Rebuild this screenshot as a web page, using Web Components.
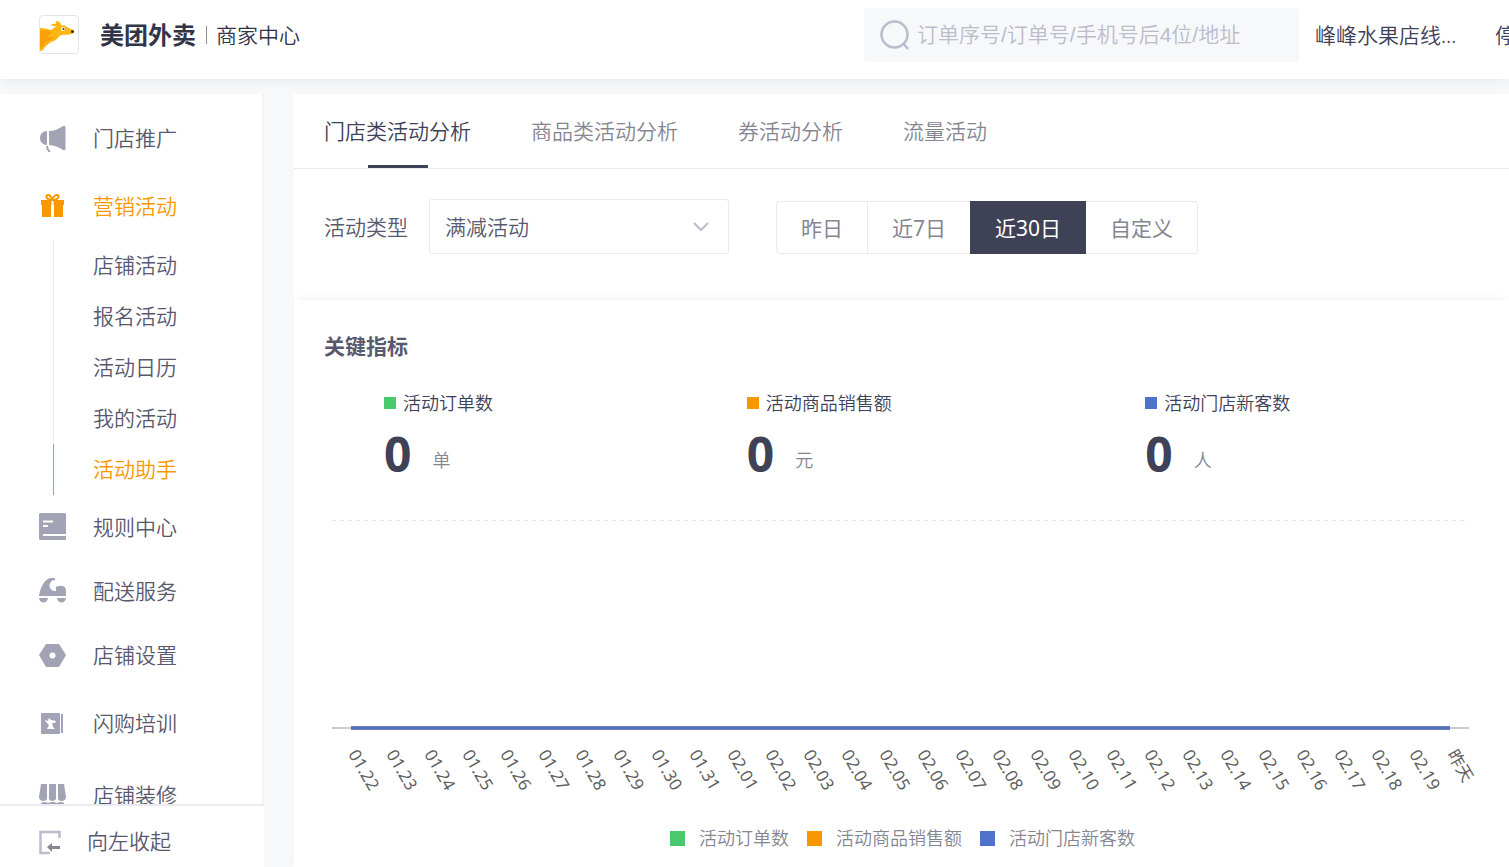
<!DOCTYPE html>
<html lang="zh-CN">
<head>
<meta charset="utf-8">
<title>美团外卖商家中心</title>
<style>
  body {
    --ink: #3f4156;
    --text: #58596e;
    --muted: #858692;
    --line: #e9eaf2;
    --icon: #a2a3b4;
    --accent: #f89800;
    --page: #f7f8fa;
    margin: 0;
    height: 100vh;
    display: flex;
    flex-direction: column;
    overflow: hidden;
    background: var(--page);
    color: var(--text);
    font: 350 21px/30px "Noto Sans", "Noto Sans CJK SC", sans-serif;
  }
  .layout {
    flex: 1;
    min-height: 0;
    display: flex;
    gap: 30px;
    padding-top: 15px;
  }
  main {
    flex: 1;
    min-width: 0;
    display: flex;
    flex-direction: column;
  }
</style>
</head>
<body>
  <app-header shop="峰峰水果店线..."></app-header>

  <div class="layout">
    <side-nav>
      <nav-item label="门店推广" size="medium">
        <svg width="28" height="28" viewBox="0 0 28 28" fill="currentColor">
          <path d="M8 7v14C4 21 1 18 1 14s3-7 7-7zM10 7c5 0 10-2 14-5h2.500v24H24c-4-3-9-4.500-14-5z"/>
          <path d="M8 22q0 4 3 6" fill="none" stroke="currentColor" stroke-width="2"/>
        </svg>
      </nav-item>
      <nav-item label="营销活动" size="medium" active>
        <svg width="28" height="28" viewBox="0 0 28 28" fill="currentColor">
          <path d="M2 8h23v5h-1v12h-9V13h-3v12H3V13H2z"/>
          <path d="M13 8C7 8 6 3 9 3q3 0 4 5 2-5 5-5c3 0 2 5-5 5z" fill="none" stroke="currentColor" stroke-width="2"/>
          <path d="M13.500 9v16" stroke="#fff" stroke-width="2"/>
        </svg>
      </nav-item>
      <nav-sub-item>店铺活动</nav-sub-item>
      <nav-sub-item>报名活动</nav-sub-item>
      <nav-sub-item>活动日历</nav-sub-item>
      <nav-sub-item>我的活动</nav-sub-item>
      <nav-sub-item active>活动助手</nav-sub-item>
      <nav-item label="规则中心">
        <svg width="28" height="28" viewBox="0 0 28 28">
          <path d="M1 0h25l1 1v26H1l-1-1V1z" fill="currentColor"/>
          <path d="M4 8.500h10M4 13h5M4 22h23" stroke="#fff" stroke-width="2"/>
        </svg>
      </nav-item>
      <nav-item label="配送服务">
        <svg width="28" height="28" viewBox="0 0 28 28" fill="currentColor">
          <path d="M0 19C1 11 6 1 12 1h4v2c-6 0-8 9-1 11h2v-4l2-1h5q3 1 3 5v5z"/>
          <path d="M0 21h9c-1 6-8 6-9 0zM18 21h9c-1 6-8 6-9 0z"/>
        </svg>
      </nav-item>
      <nav-item label="店铺设置">
        <svg width="28" height="28" viewBox="0 0 28 28">
          <path d="M7 3h13l7 11-7 12H7L0 14z" fill="currentColor" stroke-linejoin="round"/>
          <circle cx="13.500" cy="14.500" r="3" fill="#fff"/>
        </svg>
      </nav-item>
      <nav-item label="闪购培训" size="tall">
        <svg width="28" height="28" viewBox="0 0 28 28" fill="currentColor">
          <rect x="2" y="4" width="19" height="21" rx="1"/>
          <path d="M22 5h2v19h-2z"/>
          <path d="M6 11l3 1 1-3 2 2 5 1-1 2h-3l1 4 2 2H8l2-4-3-3z" fill="#fff"/>
        </svg>
      </nav-item>
      <nav-item label="店铺装修" size="tall">
        <svg width="28" height="28" viewBox="0 0 28 28" fill="currentColor">
          <path d="M2 3h6v15q-1 2-3 2-5 0-5-4zM10 3h7v15q-1 2-3.500 2T10 18zM19 3h6l2 13q0 4-5 4-2 0-3-2z"/>
          <path d="M2 22q4-2 7 0 5-2 9 0 4-2 7 0v4H2z"/>
        </svg>
      </nav-item>
    </side-nav>

    <main>
      <tab-bar tabs="门店类活动分析,商品类活动分析,券活动分析,流量活动" current="0"></tab-bar>
      <filter-bar></filter-bar>
      <metric-panel heading="关键指标">
        <metric-item color="#49c96d" value="0" unit="单">活动订单数</metric-item>
        <metric-item color="#f89800" value="0" unit="元">活动商品销售额</metric-item>
        <metric-item color="#4f73cc" value="0" unit="人">活动门店新客数</metric-item>
        <trend-chart slot="chart" from="2020-01-22" days="30"></trend-chart>
      </metric-panel>
    </main>
  </div>

<script>
class AppHeader extends HTMLElement {
  constructor() {
    super();
    this.attachShadow({ mode: 'open' }).innerHTML = `
      <style>
        :host {
          display: flex;
          align-items: center;
          height: 79px;
          box-sizing: border-box;
          padding: 0 0 10px 39px;
          background: #fff;
          box-shadow: 0 2px 10px rgba(0, 0, 0, 0.06);
          color: #323447;
        }
        .logo {
          width: 38px;
          height: 37px;
          border: 1px solid #e4e4ee;
          border-radius: 4px;
        }
        .brand { display: flex; align-items: center; gap: 10px; margin-left: 21px; }
        .brand strong { font-size: 24px; font-weight: 700; }
        .brand span { border-left: 1px solid #8a8b98; padding-left: 9px; line-height: 18px; }
        .search {
          display: flex;
          align-items: center;
          gap: 6px;
          flex: 0 1 435px;
          box-sizing: border-box;
          height: 54px;
          margin-left: auto;
          padding: 0 15px;
          border-radius: 3px;
          background: #f7f8fa;
        }
        .search input {
          flex: 1;
          min-width: 0;
          padding: 0;
          border: 0;
          outline: 0;
          background: none;
          color: inherit;
          font: 350 21px/30px "Liberation Sans", "Noto Sans CJK SC", sans-serif;
        }
        .search input::placeholder { color: #bbbccc; }
        a { color: var(--ink); text-decoration: none; white-space: nowrap; }
        .shop { margin-left: 16px; width: 180px; }
        .status { width: 14px; overflow: hidden; }
      </style>
      <svg class="logo" viewBox="0 0 38 37">
        <path d="M0 12q6 0 11 2 3-2 6-4-4 1-6-1 1-2 5-1-1-3 1-3 4 1 4 4 4 0 6 2l6 3q2 2-1 4-6 1-11 1-2 1-4 4-2 2-6 3-5 3-8 8-1 1-3 1z" fill="#fdb713"/>
        <path d="M0 15q7-2 12 1-2 4-6 4 3 2 8 1-3 4-8 5-2 4-6 7z" fill="#fa9f0a"/>
        <circle cx="23" cy="13" r="2" fill="#fff"/>
        <circle cx="23.500" cy="13" r="1" fill="#333"/>
        <circle cx="32.500" cy="15.500" r="1.500" fill="#4a2b12"/>
      </svg>
      <div class="brand"><strong>美团外卖</strong><span>商家中心</span></div>
      <label class="search">
        <svg width="32" height="32" viewBox="0 0 32 32" fill="none" stroke="#bbbccc" stroke-width="2.500">
          <circle cx="15.500" cy="15.500" r="13"/>
          <path d="M24 24l5 6"/>
        </svg>
        <input type="search" aria-label="搜索" placeholder="订单序号/订单号/手机号后4位/地址">
      </label>
      <a class="shop" href="#">${this.getAttribute('shop')}</a>
      <a class="status" href="#">停</a>
    `;
  }
}

class SideNav extends HTMLElement {
  constructor() {
    super();
    this.attachShadow({ mode: 'open' }).innerHTML = `
      <style>
        :host {
          display: flex;
          flex-direction: column;
          flex: 0 0 264px;
          min-height: 0;
        }
        nav {
          flex: 1;
          min-height: 0;
          overflow: hidden;
          padding-top: 10px;
          background: #fff;
          border-right: 2px solid #f2f2f4;
        }
        button {
          display: flex;
          align-items: center;
          gap: 20px;
          height: 63px;
          padding: 20px 39px 12px;
          border: 0;
          border-top: 2px solid var(--line);
          background: #fff;
          color: inherit;
          font: inherit;
        }
      </style>
      <nav><slot></slot></nav>
      <button type="button">
        <svg width="28" height="28" viewBox="0 0 28 28" fill="none">
          <path d="M20.500 11V5h-19v21H11" stroke="#bbbccc" stroke-width="2.500"/>
          <path d="M8 20l5-4v3h8v3h-8v3z" fill="#858692"/>
        </svg>
        向左收起
      </button>
    `;
  }
}

class NavItem extends HTMLElement {
  constructor() {
    super();
    this.attachShadow({ mode: 'open' }).innerHTML = `
      <style>
        :host { display: block; height: 64px; }
        :host([size="medium"]) { height: 68px; }
        :host([size="tall"]) { height: 72px; }
        a {
          display: flex;
          align-items: center;
          gap: 26px;
          height: 100%;
          padding-left: 39px;
          color: inherit;
          text-decoration: none;
        }
        .icon { display: flex; color: var(--icon); }
        :host([active]) a, :host([active]) .icon { color: var(--accent); }
      </style>
      <a href="#"><span class="icon"><slot></slot></span>${this.getAttribute('label')}</a>
    `;
  }
}

class NavSubItem extends HTMLElement {
  constructor() {
    super();
    this.attachShadow({ mode: 'open' }).innerHTML = `
      <style>
        :host {
          display: block;
          margin-left: 53px;
          border-left: 1px solid var(--line);
        }
        :host([active]) { border-color: var(--accent); color: var(--accent); }
        a {
          display: block;
          padding-left: 39px;
          line-height: 51px;
          color: inherit;
          text-decoration: none;
        }
      </style>
      <a href="#"><slot></slot></a>
    `;
  }
}

class TabBar extends HTMLElement {
  constructor() {
    super();
    const tabs = this.getAttribute('tabs').split(',');
    const current = Number(this.getAttribute('current'));

    this.attachShadow({ mode: 'open' }).innerHTML = `
      <style>
        :host {
          display: flex;
          gap: 60px;
          padding-left: 30px;
          background: #fff;
          border-bottom: 1px solid var(--line);
        }
        button {
          height: 74px;
          padding: 0;
          border: 0;
          background: none;
          color: var(--muted);
          font: inherit;
          white-space: nowrap;
        }
        button[aria-selected="true"] {
          color: var(--ink);
          background: linear-gradient(var(--ink), var(--ink)) center bottom / 60px 3px no-repeat;
        }
      </style>
      ${tabs.map((tab, i) => `
        <button type="button" role="tab" aria-selected="${i === current}">${tab}</button>
      `).join('')}
    `;
    this.setAttribute('role', 'tablist');
  }
}

class FilterBar extends HTMLElement {
  constructor() {
    super();
    this.attachShadow({ mode: 'open' }).innerHTML = `
      <style>
        :host {
          display: flex;
          align-items: center;
          padding: 30px 30px 46px;
          background: #fff;
        }
        .select {
          display: grid;
          align-items: center;
          width: 300px;
          margin: 0 47px 0 21px;
        }
        .select > * { grid-area: 1 / 1; }
        .select svg { justify-self: end; margin-right: 20px; pointer-events: none; }
        select {
          appearance: none;
          height: 55px;
          padding: 0 15px;
          border: 1px solid var(--line);
          border-radius: 3px;
          background: #fff;
          color: inherit;
          font: inherit;
        }
        .range { display: flex; padding-top: 2px; font-weight: 400; }
        .range button {
          height: 53px;
          padding: 0 24px;
          margin-left: -1px;
          border: 1px solid var(--line);
          background: #fff;
          color: var(--muted);
          font: inherit;
          white-space: nowrap;
        }
        .range button:first-child { margin-left: 0; border-radius: 3px 0 0 3px; }
        .range button:last-child { border-radius: 0 3px 3px 0; }
        .range button[aria-pressed="true"] {
          border-color: var(--ink);
          background: var(--ink);
          color: #fff;
          z-index: 1;
        }
      </style>
      <label for="type">活动类型</label>
      <div class="select">
        <select id="type"><option>满减活动</option></select>
        <svg width="16" height="10" viewBox="0 0 16 10" fill="none" stroke="#bbbccc" stroke-width="2">
          <path d="M1 1l7 7 7-7"/>
        </svg>
      </div>
      <div class="range">
        <button type="button" aria-pressed="false">昨日</button>
        <button type="button" aria-pressed="false">近7日</button>
        <button type="button" aria-pressed="true">近30日</button>
        <button type="button" aria-pressed="false">自定义</button>
      </div>
    `;
  }
}

class MetricPanel extends HTMLElement {
  constructor() {
    super();
    this.attachShadow({ mode: 'open' }).innerHTML = `
      <style>
        :host {
          display: block;
          flex: 1;
          background: #fff;
          box-shadow: 0 -4px 8px -4px rgba(0, 0, 0, 0.08);
        }
        h2 { margin: 0; padding: 31px 30px 0; font-size: 21px; font-weight: 700; line-height: 30px; }
        .items {
          display: flex;
          justify-content: space-between;
          padding: 28px 18% 0 90px;
        }
      </style>
      <h2>${this.getAttribute('heading')}</h2>
      <div class="items"><slot></slot></div>
      <slot name="chart"></slot>
    `;
  }
}

class MetricItem extends HTMLElement {
  constructor() {
    super();
    this.attachShadow({ mode: 'open' }).innerHTML = `
      <style>
        :host { display: block; font-size: 18px; line-height: 28px; color: var(--ink); white-space: nowrap; }
        .label { display: flex; align-items: center; gap: 7px; }
        .label i { width: 12px; height: 12px; background: ${this.getAttribute('color')}; }
        .value { display: flex; align-items: flex-end; gap: 21px; margin-top: 17px; color: var(--muted); }
        .value b { color: var(--ink); font-size: 48px; font-weight: 700; line-height: 40px; }
      </style>
      <div class="label"><i></i><slot></slot></div>
      <div class="value"><b>${this.getAttribute('value')}</b>${this.getAttribute('unit')}</div>
    `;
  }
}

class TrendChart extends HTMLElement {
  constructor() {
    super();
    this.attachShadow({ mode: 'open' }).innerHTML = `
      <style>
        :host { display: block; padding: 46px 40px 0 38px; font-size: 18px; color: #5f5f5f; }
        .plot {
          height: 207px;
          border-bottom: 2px solid #ccc;
          background: repeating-linear-gradient(90deg, #e6e6e6 0 4px, transparent 4px 8px) top / 100% 1px no-repeat;
        }
        /* the zero line runs from the middle of the first day to the middle of the last */
        .series {
          height: 2px;
          margin: -3px calc(50% / ${this.days.length}) 0;
          border: solid #6f7f9c;
          border-width: 1px 0;
          background: #4f73cc;
        }
        .days { display: flex; height: 93px; padding-top: 6px; box-sizing: border-box; }
        .days span { flex: 1 1 0; width: 0; padding-left: 21px; box-sizing: border-box; }
        .days b {
          display: block;
          width: max-content;
          font-size: 17px;
          font-weight: 400;
          transform: rotate(60deg);
          transform-origin: left center;
        }
        .legend { display: flex; justify-content: center; gap: 18px; padding-left: 4px; color: var(--muted); }
        .legend span { display: flex; align-items: center; gap: 14px; }
        .legend i { width: 15px; height: 15px; }
      </style>
      <div class="plot"></div>
      <div class="series"></div>
      <div class="days">${this.days.map(day => `<span><b>${day}</b></span>`).join('')}</div>
      <div class="legend">
        <span><i style="background: #49c96d"></i>活动订单数</span>
        <span><i style="background: #f89800"></i>活动商品销售额</span>
        <span><i style="background: #4f73cc"></i>活动门店新客数</span>
      </div>
    `;
  }

  // MM.DD labels, the last one is always yesterday
  get days() {
    const start = new Date(this.getAttribute('from') + 'T00:00:00Z');
    const count = Number(this.getAttribute('days'));
    const days = [];

    for (let i = 0; i < count - 1; i++) {
      const date = new Date(start.getTime() + i * 86400000);
      days.push(date.toISOString().slice(5, 10).replace('-', '.'));
    }

    days.push('昨天');
    return days;
  }
}

customElements.define('app-header', AppHeader);
customElements.define('side-nav', SideNav);
customElements.define('nav-item', NavItem);
customElements.define('nav-sub-item', NavSubItem);
customElements.define('tab-bar', TabBar);
customElements.define('filter-bar', FilterBar);
customElements.define('metric-panel', MetricPanel);
customElements.define('metric-item', MetricItem);
customElements.define('trend-chart', TrendChart);
</script>
</body>
</html>
